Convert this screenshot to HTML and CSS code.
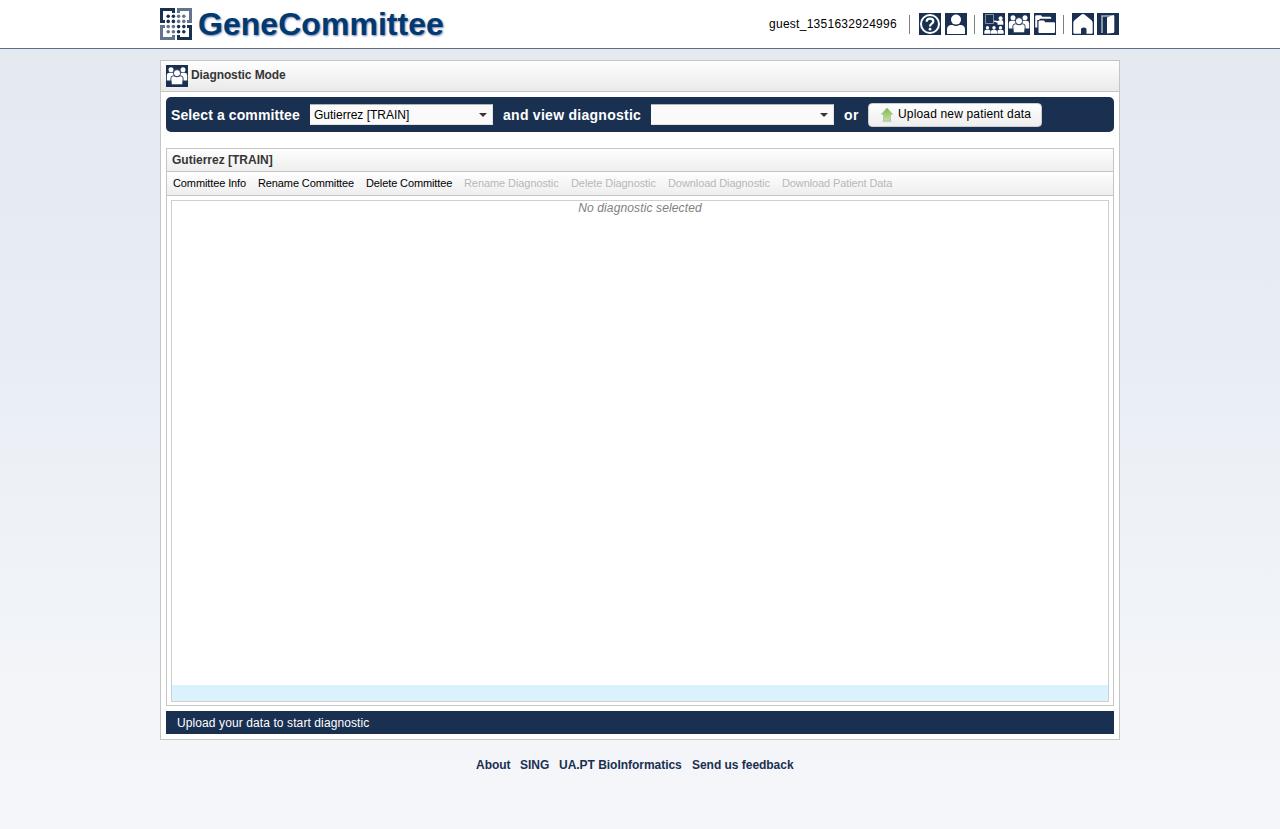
FILE: index.html
```html
<!DOCTYPE html>
<html lang="en">
<head>
<meta charset="utf-8">
<title>GeneCommittee</title>
<link rel="stylesheet" href="styles.css">
</head>
<body>
<svg width="0" height="0" class="defs">
  <symbol id="group" viewBox="0 0 22 22">
    <rect width="22" height="22" fill="#193051"/>
    <g fill="#fff">
      <circle cx="5" cy="4.8" r="2.5"/><circle cx="17" cy="4.8" r="2.5"/>
      <path d="M.8 15.5V10Q1 7.8 3.5 7.8H9V15.5ZM21.2 15.5V10Q21 7.8 18.5 7.8H13V15.5Z"/>
      <circle cx="11" cy="8.2" r="3.6" stroke="#193051" stroke-width=".9"/>
      <path d="M5.4 19.8L4.8 13.5Q4.8 10.8 7.5 10.8L11 11.8L14.5 10.8Q17.2 10.8 17.2 13.5L16.6 19.8Z" stroke="#193051" stroke-width=".9"/>
    </g>
  </symbol>
</svg>
<header class="header">
  <div class="header-inner">
    <svg class="logo" width="32" height="32" viewBox="0 0 32 32">
      <g fill="none" stroke-width="3">
        <path d="M13.5 5V1.5H1.5V13.5H5" stroke="#193051"/>
        <path d="M18.5 5V1.5H30.5V13.5H27" stroke="#64748e"/>
        <path d="M13.5 27V30.5H1.5V18.5H5" stroke="#64748e"/>
        <path d="M18.5 27V30.5H30.5V18.5H27" stroke="#193051"/>
      </g>
      <g fill="#193051">
        <circle cx="8.2" cy="8.2" r="1.8"/><circle cx="13.4" cy="8.2" r="1.8"/><circle cx="8.2" cy="13.4" r="1.8"/><circle cx="13.4" cy="13.4" r="1.8"/>
        <circle cx="18.6" cy="18.6" r="1.8"/><circle cx="23.8" cy="18.6" r="1.8"/><circle cx="18.6" cy="23.8" r="1.8"/><circle cx="23.8" cy="23.8" r="1.8"/>
      </g>
      <g fill="#64748e">
        <circle cx="18.6" cy="8.2" r="1.8"/><circle cx="23.8" cy="8.2" r="1.8"/><circle cx="18.6" cy="13.4" r="1.8"/><circle cx="23.8" cy="13.4" r="1.8"/>
        <circle cx="8.2" cy="18.6" r="1.8"/><circle cx="13.4" cy="18.6" r="1.8"/><circle cx="8.2" cy="23.8" r="1.8"/><circle cx="13.4" cy="23.8" r="1.8"/>
      </g>
    </svg>
    <span class="brand">GeneCommittee</span>
    <span class="user">guest_1351632924996</span>
    <nav class="icons">
      <span class="sep first"></span>
      <svg class="i-help" width="22" height="22"><rect width="22" height="22" fill="#193051"/><circle cx="11" cy="11" r="9" fill="none" stroke="#fff" stroke-width="2"/><path d="M7.6 8.7Q7.8 5.7 11 5.7Q14.3 5.7 14.3 8.3Q14.3 9.8 12.5 10.9Q11 11.8 11 13.6" fill="none" stroke="#fff" stroke-width="2.2"/><circle cx="11" cy="16.2" r="1.4" fill="#fff"/></svg>
      <svg class="i-user" width="22" height="22"><rect width="22" height="22" fill="#193051"/><circle cx="11" cy="6.6" r="5" fill="#fff"/><path d="M2 21V16.5Q2 12 6.5 12H7.5Q11 14 14.5 12H15.5Q20 12 20 16.5V21Z" fill="#fff"/></svg>
      <span class="sep"></span>
      <svg class="i-class" width="22" height="22"><rect width="22" height="22" fill="#193051"/><path d="M2.5 1.5H10.5V10.5H2.5Z" fill="none" stroke="#8290a5"/><g fill="#fff"><circle cx="17.6" cy="5.2" r="2"/><path d="M11 7.5L15 8Q16 7 18 7Q20.3 7 20.3 9V11.7H14.5V9.7L11 8.8Z"/><circle cx="4.5" cy="14.7" r="1.7"/><circle cx="11" cy="14.7" r="1.7"/><circle cx="17.5" cy="14.7" r="1.7"/><path d="M1.3 20.7V18.7Q1.3 16.7 3.3 16.7H5.7Q7.6 16.7 7.6 18.7V20.7ZM8 20.7V18.7Q8 16.7 10 16.7H12Q14 16.7 14 18.7V20.7ZM14.4 20.7V18.7Q14.4 16.7 16.3 16.7H18.7Q20.7 16.7 20.7 18.7V20.7Z"/></g></svg>
      <svg class="i-group" width="22" height="22"><use href="#group"/></svg>
      <svg class="i-folder" width="22" height="22"><rect width="22" height="22" fill="#193051"/><path d="M1.2 14.5V3.3Q1.2 2.3 2.2 2.3H7L8.2 3.8H16.3Q17.3 3.8 17.3 5.8H6L5 7H3.3V14.5Z" fill="#fff"/><path d="M4.5 9Q4.5 7.5 5.7 7.5H10L11.2 9.3H20Q21 9.3 21 10.3V19Q21 20 20 20H5.5Q4.5 20 4.5 19Z" fill="#fff"/></svg>
      <span class="sep"></span>
      <svg class="i-home" width="22" height="22"><rect width="22" height="22" fill="#193051"/><path d="M1.3 10Q1.3 8.5 2.5 7.3L9.5 1.6Q11 .5 12.5 1.6L19.5 7.3Q20.7 8.5 20.7 10V19.8Q20.7 20.8 19.7 20.8H14.5V16.8Q14.5 14.6 11.8 14.6Q9 14.6 9 16.8V20.8H2.3Q1.3 20.8 1.3 19.8Z" fill="#fff"/></svg>
      <svg class="i-exit" width="22" height="22"><rect width="22" height="22" fill="#193051"/><path d="M5 20V3H15" fill="none" stroke="#a3aebd" stroke-width="1.6"/><path d="M10 4.5L15.5 2.2Q17.3 1.8 17.3 3.3V18.7Q17.3 20.1 15.5 20L10 20.5Z" fill="#fff"/></svg>
    </nav>
  </div>
</header>
<main class="window">
  <div class="window-title"><svg width="22" height="22"><use href="#group"/></svg><span>Diagnostic Mode</span></div>
  <div class="window-body">
    <div class="selector">
      <span class="label l1">Select a committee</span>
      <div class="combo"><span>Gutierrez [TRAIN]</span><i class="arrow"></i></div>
      <span class="label l2">and view diagnostic</span>
      <div class="combo"><span></span><i class="arrow"></i></div>
      <span class="label l3">or</span>
      <button class="upload">
        <svg width="16" height="16" viewBox="0 0 16 16"><defs><linearGradient id="arrowfill" x2="0" y2="1"><stop offset="0" stop-color="#7fb93c"/><stop offset=".6" stop-color="#a9d183"/><stop offset="1" stop-color="#c4ddb0"/></linearGradient></defs><ellipse cx="8" cy="14.5" rx="5.5" ry="1" fill="#ddd"/><path d="M8 1L13.6 7.3H11.5V14H4.5V7.3H2.4Z" fill="url(#arrowfill)" stroke="#a5bd8c" stroke-width=".7"/></svg>
        <span>Upload new patient data</span>
      </button>
    </div>
    <section class="panel">
      <h2 class="panel-title">Gutierrez [TRAIN]</h2>
      <div class="toolbar">
        <span class="m1">Committee Info</span><span class="m2">Rename Committee</span><span class="m3">Delete Committee</span><span class="m4 off">Rename Diagnostic</span><span class="m5 off">Delete Diagnostic</span><span class="m6 off">Download Diagnostic</span><span class="m7 off">Download Patient Data</span>
      </div>
      <div class="content"><p><em>No diagnostic selected</em></p><div class="strip"></div></div>
    </section>
    <div class="status">Upload your data to start diagnostic</div>
  </div>
</main>
<footer class="footer"><a class="f1">About</a><a class="f2">SING</a><a class="f3">UA.PT BioInformatics</a><a class="f4">Send us feedback</a></footer>
</body>
</html>
```
FILE: styles.css
```css
* { box-sizing: border-box; }
body { margin: 0; height: 829px; overflow: hidden; font: 12px/14px "Liberation Sans", Arial, sans-serif; color: #000; background: linear-gradient(#e5eaf1 49px, #e7ecf5 320px, #edf1f6 480px, #f3f5f9 700px, #f5f6fa 829px); }
.defs { position: absolute; }
svg { display: block; flex: none; }
span, a { white-space: nowrap; }
.header { height: 49px; background: #fff; border-bottom: 1px solid #5d6e86; }
.header-inner { width: 960px; height: 48px; margin: 0 auto; display: flex; align-items: center; }
.brand { width: 260px; margin-left: 6px; font-size: 32px; line-height: 36px; font-weight: bold; letter-spacing: .04px; color: #003a70; text-shadow: 1px 1px 2px #7c84b0; }
.user { margin-left: auto; width: 140px; letter-spacing: .27px; }
.icons { width: 211px; display: flex; align-items: center; }
.sep { width: 1px; height: 19px; background: #808080; flex: none; margin-left: 7px; }
.sep.first { margin-left: 0; }
.i-help { margin-left: 9px; }
.i-user { margin-left: 4px; }
.i-class, .i-home { margin-left: 8px; }
.i-group, .i-exit { margin-left: 3px; }
.i-folder { margin-left: 4px; }
.window { width: 960px; height: 680px; margin: 11px auto 0; border: 1px solid #c5c5c5; background: #fff; }
.window-title { height: 31px; padding: 0 5px 1px; display: flex; align-items: center; gap: 3px; font-weight: bold; color: #363636; letter-spacing: -.09px; border-bottom: 1px solid #c5c5c5; background: linear-gradient(#fefefe, #eaeaea); }
.window-title span { padding-bottom: 1px; }
.window-body { padding: 5px; }
.selector { height: 35px; padding: 0 5px; border-radius: 5px; background: #193051; display: flex; align-items: center; }
.label { color: #fff; font-size: 14px; line-height: 18px; font-weight: bold; letter-spacing: .11px; }
.l1 { width: 139px; }
.l2 { width: 148px; margin-left: 10px; letter-spacing: .27px; }
.l3 { width: 24px; margin-left: 10px; letter-spacing: .4px; }
.combo { width: 183px; height: 21px; padding: 0 5px 0 4px; display: flex; align-items: center; justify-content: space-between; background: #fafafa; border: 1px solid #e3e3e3; border-top-color: #b2b2b2; border-left-width: 0; }
.arrow { border: 4px solid transparent; border-top-color: #363636; border-bottom: 0; }
.upload { width: 174px; height: 24px; padding: 0 0 1px 10px; display: flex; align-items: center; gap: 3px; font: inherit; color: #000; letter-spacing: .16px; border: 1px solid #ccc; border-radius: 4px; background: linear-gradient(#fefefe, #eee); }
.upload svg { position: relative; top: 1px; }
.panel { height: 558px; margin-top: 16px; border: 1px solid #c5c5c5; }
.panel-title { margin: 0; height: 23px; padding: 4px 5px; font-size: 12px; line-height: 14px; color: #363636; border-bottom: 1px solid #c5c5c5; background: linear-gradient(#fefefe, #eee); }
.toolbar { height: 24px; padding: 0 6px 2px; display: flex; align-items: center; font-size: 11px; letter-spacing: -.11px; border-bottom: 1px solid #c5c5c5; background: linear-gradient(#fefefe, #eee); }
.m1 { width: 85px; } .m2 { width: 108px; } .m3 { width: 98px; } .m4 { width: 107px; } .m5 { width: 97px; } .m6 { width: 114px; }
.off { color: #b8b8b8; letter-spacing: -.08px; }
.m7 { letter-spacing: -.11px; }
.content { height: 502px; margin: 4px; border: 1px solid #cfcfcf; display: flex; flex-direction: column; justify-content: space-between; }
.content p { margin: 0; text-align: center; color: #808080; letter-spacing: .13px; }
.strip { height: 16px; background: #d9f2fe; }
.status { height: 23px; margin-top: 5px; padding: 5px 11px; background: #193051; color: #fff; letter-spacing: .1px; }
.footer { width: 960px; margin: 18px auto 0; padding-left: 316px; display: flex; font-weight: bold; color: #193051; letter-spacing: -.03px; }
.f1 { width: 44px; } .f2 { width: 39px; } .f3 { width: 133px; }
```
